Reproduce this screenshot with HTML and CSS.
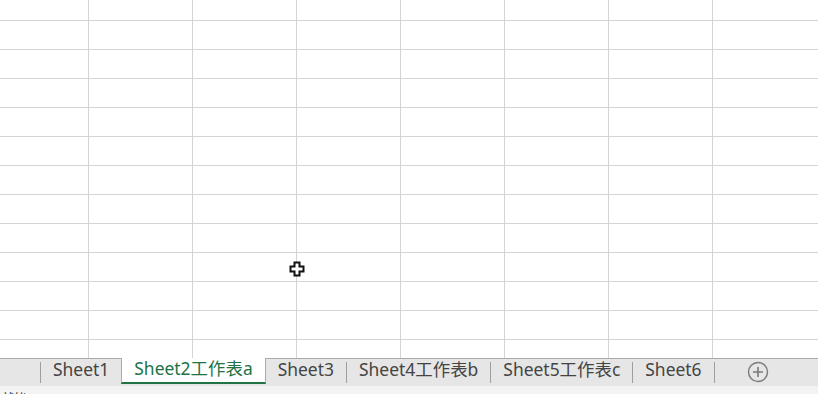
FILE: index.html
```html
<!DOCTYPE html>
<html lang="zh-CN">
<head>
  <meta charset="UTF-8">
  <title>工作簿</title>
  <link rel="stylesheet" href="styles.css">
</head>
<body>
  <div class="sheet">
    <svg class="cursor" width="17" height="17" viewBox="0 0 17 17">
      <path d="M5.5 1.5h5v4h4v5h-4v4h-5v-4h-4v-5h4z" fill="#fff" stroke="#111" stroke-width="2"/>
    </svg>
  </div>

  <div class="tabbar">
    <span class="sep"></span>
    <span class="tab">Sheet1</span>
    <span class="tab active">Sheet2工作表a</span>
    <span class="tab">Sheet3</span>
    <span class="sep"></span>
    <span class="tab">Sheet4工作表b</span>
    <span class="sep"></span>
    <span class="tab">Sheet5工作表c</span>
    <span class="sep"></span>
    <span class="tab">Sheet6</span>
    <span class="sep"></span>
    <span class="add">
      <svg width="22" height="22" viewBox="0 0 22 22">
        <circle cx="11" cy="11" r="9.5" fill="none" stroke="#7a7a7a" stroke-width="1.4"/>
        <path d="M11 6v10M6 11h10" stroke="#7a7a7a" stroke-width="1.6"/>
      </svg>
    </span>
  </div>

  <div class="status">就绪</div>
</body>
</html>
```

FILE: styles.css
```css
html, body {
  margin: 0;
  height: 394px;
  overflow: hidden;
}
body {
  font-family: "Noto Sans", "Noto Sans CJK SC", sans-serif;
  background: #fff;
}
.sheet {
  position: relative;
  height: 358px;
  background-color: #fff;
  background-image:
    repeating-linear-gradient(to right, transparent 0 103px, #d4d4d4 103px 104px),
    repeating-linear-gradient(to bottom, transparent 0 28px, #d4d4d4 28px 29px);
  background-position: -15px 0, 0 -8px;
}
.cursor {
  position: absolute;
  left: 289px;
  top: 261px;
}
.tabbar {
  display: flex;
  align-items: flex-start;
  height: 27px;
  padding-left: 40px;
  background: #e6e6e6;
  border-top: 1px solid #ababab;
}
.sep {
  width: 1px;
  height: 21px;
  margin-top: 3px;
  background: #9e9e9e;
}
.tab {
  height: 24px;
  line-height: 20px;
  padding: 0 12px;
  font-size: 17.45px;
  color: #444;
  white-space: nowrap;
}
.tab.active {
  margin-top: -1px;
  background: #fff;
  color: #217346;
  border-left: 1px solid #ababab;
  border-right: 1px solid #ababab;
  border-bottom: 2px solid #217346;
}
.add {
  margin-left: 32px;
  margin-top: 2px;
  height: 22px;
}
.status {
  height: 20px;
  padding: 5px 0 0 2px;
  background: #f3f3f3;
  font-size: 12px;
  line-height: 16px;
  color: #222;
}
```
